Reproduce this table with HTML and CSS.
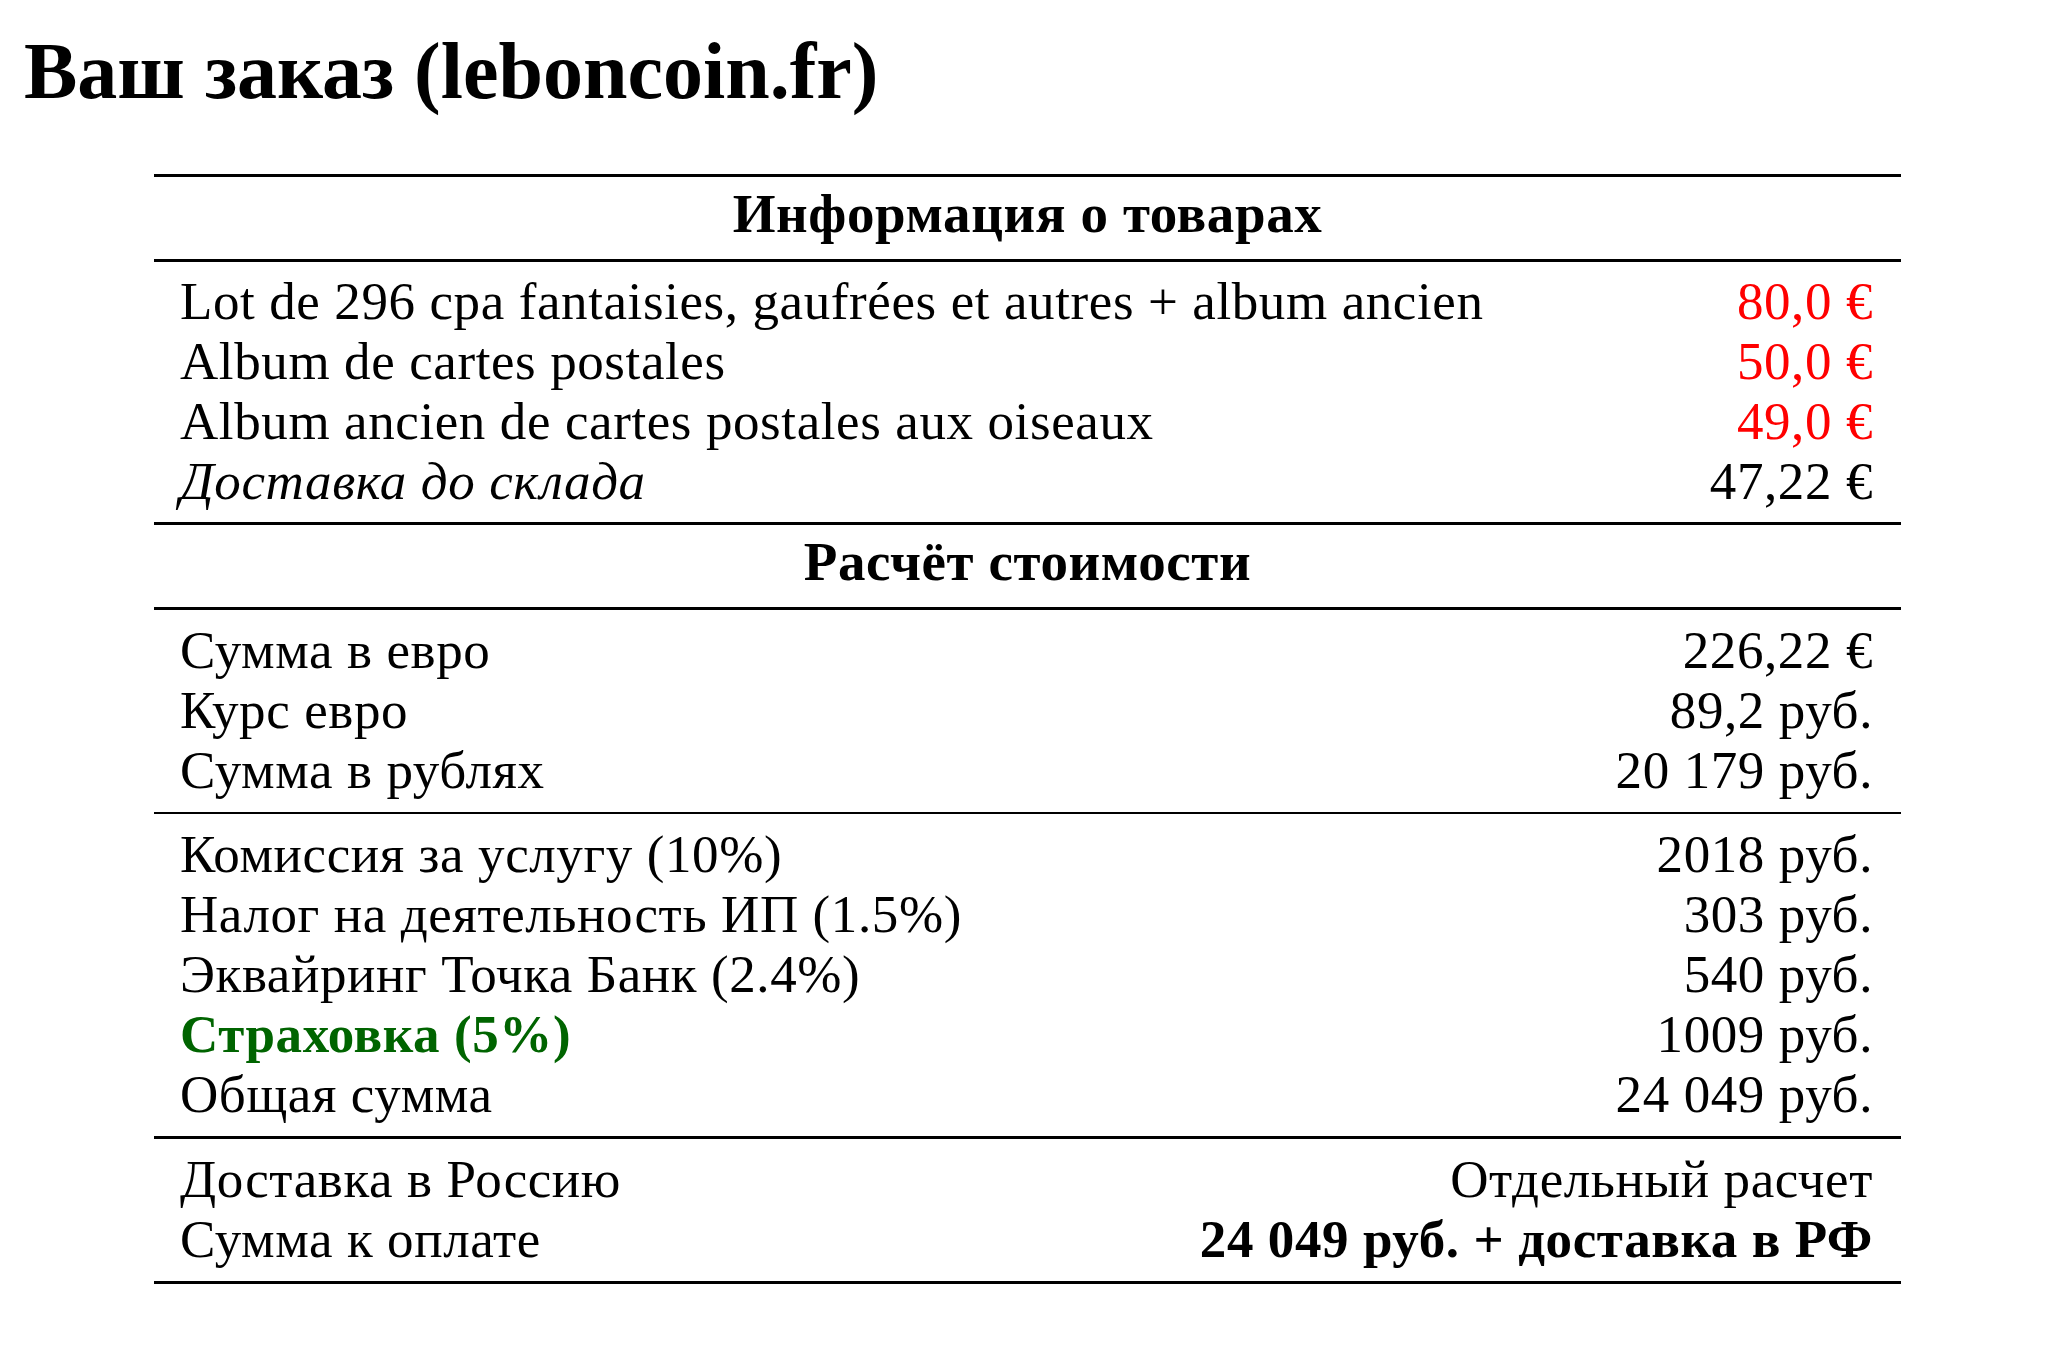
FILE: index.html
```html
<!DOCTYPE html>
<html lang="ru">
<head>
<meta charset="utf-8">
<title>Ваш заказ (leboncoin.fr)</title>
<link rel="stylesheet" href="styles.css">
</head>
<body>
<h1 class="title">Ваш заказ (leboncoin.fr)</h1>
<div class="order">
  <div class="head">Информация о товарах</div>
  <div class="group first">
    <div class="row"><span>Lot de 296 cpa fantaisies, gaufrées et autres + album ancien</span><span class="price">80,0 €</span></div>
    <div class="row"><span>Album de cartes postales</span><span class="price">50,0 €</span></div>
    <div class="row"><span>Album ancien de cartes postales aux oiseaux</span><span class="price">49,0 €</span></div>
    <div class="row"><span class="it">Доставка до склада</span><span>47,22 €</span></div>
  </div>
  <div class="head">Расчёт стоимости</div>
  <div class="group thin">
    <div class="row"><span>Сумма в евро</span><span>226,22 €</span></div>
    <div class="row"><span>Курс евро</span><span>89,2 руб.</span></div>
    <div class="row"><span>Сумма в рублях</span><span>20 179 руб.</span></div>
  </div>
  <div class="group">
    <div class="row"><span>Комиссия за услугу (10%)</span><span>2018 руб.</span></div>
    <div class="row"><span>Налог на деятельность ИП (1.5%)</span><span>303 руб.</span></div>
    <div class="row"><span>Эквайринг Точка Банк (2.4%)</span><span>540 руб.</span></div>
    <div class="row"><span class="ins">Страховка (5%)</span><span>1009 руб.</span></div>
    <div class="row"><span>Общая сумма</span><span>24 049 руб.</span></div>
  </div>
  <div class="group">
    <div class="row"><span>Доставка в Россию</span><span>Отдельный расчет</span></div>
    <div class="row"><span>Сумма к оплате</span><span class="total">24 049 руб. + доставка в РФ</span></div>
  </div>
</div>
</body>
</html>
```
FILE: styles.css
```css
html, body {
  margin: 0;
  padding: 0;
  background: #fff;
  color: #000;
}
body {
  font-family: "Liberation Serif", "DejaVu Serif", serif;
  padding: 0 0 0 24px;
}
.title {
  margin: 0;
  padding-top: 26px;
  font-size: 80px;
  line-height: 90px;
  font-weight: bold;
}
.order {
  margin: 58px 0 0 130px;
  width: 1747px;
  border-top: 3px solid #000;
  font-size: 53px;
  line-height: 60px;
  letter-spacing: 0.6px;
}
.head {
  text-align: center;
  font-size: 55px;
  font-weight: bold;
  padding: 7px 0 15px;
  border-bottom: 3px solid #000;
}
.group {
  padding: 10px 28px 12px 26px;
  border-bottom: 3px solid #000;
}
.group.first {
  padding-top: 9px;
  padding-bottom: 11px;
}
.group.thin {
  border-bottom-width: 2px;
}
.row {
  display: flex;
  justify-content: space-between;
}
.price {
  color: #ff0000;
}
.it {
  font-style: italic;
}
.ins {
  color: #006400;
  font-weight: bold;
}
.total {
  font-weight: bold;
}
```
